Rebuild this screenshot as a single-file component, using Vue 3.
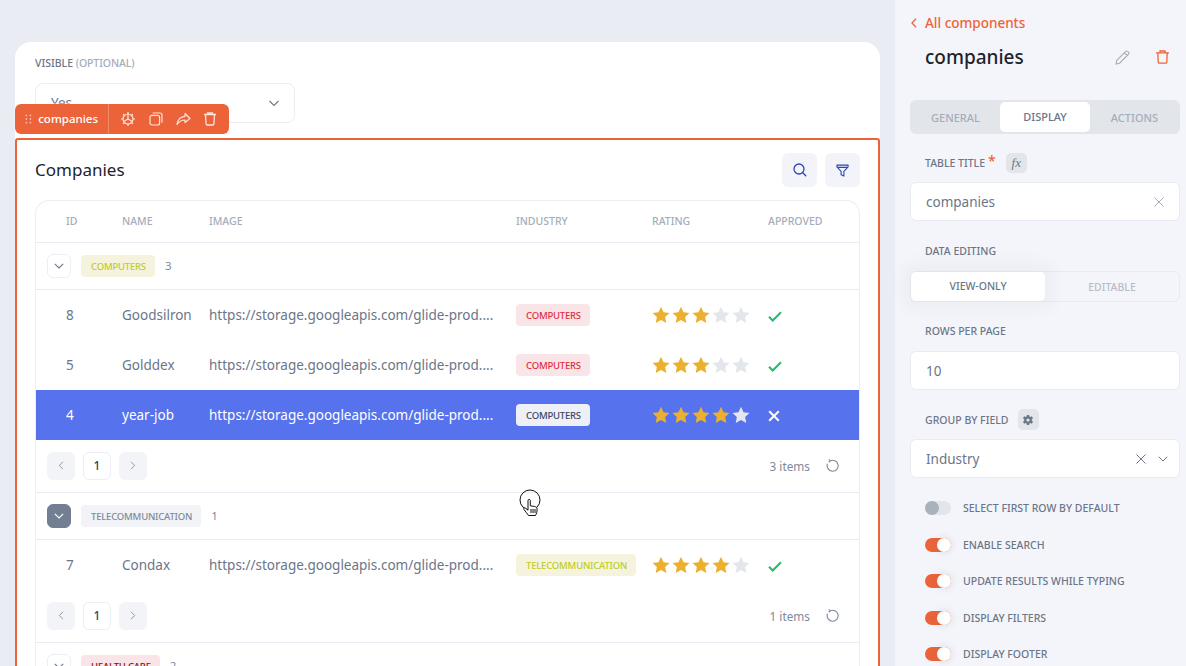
<script setup>
const groups = [
  {
    name: 'COMPUTERS', tone: 'lime', count: 3, footer: '3 items',
    rows: [
      { id: 8, name: 'Goodsilron', tag: 'COMPUTERS', tone: 'red', stars: 3, ok: true },
      { id: 5, name: 'Golddex', tag: 'COMPUTERS', tone: 'red', stars: 3, ok: true },
      { id: 4, name: 'year-job', tag: 'COMPUTERS', tone: 'red', stars: 4, ok: false, active: true }
    ]
  },
  {
    name: 'TELECOMMUNICATION', tone: 'gray', count: 1, footer: '1 items', open: true,
    rows: [{ id: 7, name: 'Condax', tag: 'TELECOMMUNICATION', tone: 'lime', stars: 4, ok: true }]
  }
]
const url = 'https://storage.googleapis.com/glide-prod....'
const toggles = [
  { label: 'SELECT FIRST ROW BY DEFAULT', on: false },
  { label: 'ENABLE SEARCH', on: true },
  { label: 'UPDATE RESULTS WHILE TYPING', on: true },
  { label: 'DISPLAY FILTERS', on: true },
  { label: 'DISPLAY FOOTER', on: true }
]
const starPath = 'M8.5 .6l2.4 5.2 5.6.7-4.100 3.900 1.100 5.600-5-2.800-5 2.800 1.100-5.600L.5 6.500l5.600-.7z'
</script>

<template>
  <div class="page">
    <main class="canvas">
      <section class="card">
        <div class="visible-field">
          <div class="field-label">VISIBLE <span>(OPTIONAL)</span></div>
          <div class="visible-select">
            <span>Yes</span>
            <svg width="12" height="12" viewBox="0 0 12 12" fill="none" stroke="#6b7688" stroke-width="1.100"><path d="M1.500 4l4.500 4.500L10.500 4" /></svg>
          </div>
        </div>

        <div class="toolbar">
          <div class="toolbar-name">
            <svg width="8" height="12" viewBox="0 0 8 12" fill="#f7bda8"><circle cx="1.500" cy="2" r="1" /><circle cx="6" cy="2" r="1" /><circle cx="1.500" cy="6" r="1" /><circle cx="6" cy="6" r="1" /><circle cx="1.500" cy="10" r="1" /><circle cx="6" cy="10" r="1" /></svg>
            <span>companies</span>
          </div>
          <div class="toolbar-icons">
            <svg width="16" height="16" viewBox="0 0 16 16" fill="none" stroke="#fde3d8" stroke-width="1.200"><circle cx="8" cy="8" r="5" /><path d="M8 1v2M8 13v2M1 8h2M13 8h2M3.050 3.050l1.410 1.410M11.540 4.460l1.410-1.410M3.050 12.950l1.410-1.410M11.540 11.540l1.410 1.410M8 8V3M8 8l-4.300 2.500M8 8l4.300 2.500" /></svg>
            <svg width="14" height="14" viewBox="0 0 14 14" fill="none" stroke="#fde3d8" stroke-width="1.200"><rect x="1" y="3.400" width="9.600" height="9.600" rx="2" /><path d="M3.600 1h7.400A2 2 0 0 1 13 3v7.400" /></svg>
            <svg width="15" height="14" viewBox="0 0 15 14" fill="none" stroke="#fde3d8" stroke-width="1.200" stroke-linejoin="round"><path d="M9 1.500L14 6.500 9 10.500V8C5.500 8 3 9.500 1 12.500 1.500 8 4.500 4.800 9 4.300z" /></svg>
            <svg width="12" height="14" viewBox="0 0 12 14" fill="none" stroke="#fde3d8" stroke-width="1.300"><path d="M0 2.500h12M3.500 2.500V1h5v1.500M1.500 2.500l.6 9.300c0 .7.500 1.200 1.200 1.200h5.400c.7 0 1.200-.5 1.200-1.200l.6-9.300" /></svg>
          </div>
        </div>

        <div class="selected-block">
          <div class="table-head">
            <h2>Companies</h2>
            <div class="head-actions">
              <button class="square-btn">
                <svg width="14" height="14" viewBox="0 0 14 14" fill="none" stroke="#2f45b5" stroke-width="1.300"><circle cx="6" cy="6" r="5" /><path d="M9.800 9.800l3.400 3.400" /></svg>
              </button>
              <button class="square-btn">
                <svg width="13" height="13" viewBox="0 0 14 14" fill="none" stroke="#2f45b5" stroke-width="1.200" stroke-linejoin="round"><path d="M1 1.200h12v2L8.500 8v5l-3-1.500V8L1 3.200zM1 3.600h12" /></svg>
              </button>
            </div>
          </div>

          <div class="table">
            <div class="grid-row header-row">
              <div>ID</div><div>NAME</div><div>IMAGE</div><div>INDUSTRY</div><div>RATING</div><div>APPROVED</div>
            </div>

            <template v-for="group in groups" :key="group.name">
              <div class="group-row">
                <button class="collapse" :class="{ open: group.open }">
                  <svg width="10" height="6" viewBox="0 0 10 6" fill="none" stroke="currentColor" stroke-width="1.100"><path d="M.8.800L5 5l4.200-4.200" /></svg>
                </button>
                <span class="tag" :class="group.tone">{{ group.name }}</span>
                <span class="group-count">{{ group.count }}</span>
              </div>

              <div v-for="row in group.rows" :key="row.id" class="grid-row data-row" :class="{ active: row.active }">
                <div>{{ row.id }}</div>
                <div>{{ row.name }}</div>
                <div class="url">{{ url }}</div>
                <div><span class="tag" :class="row.active ? 'light' : row.tone">{{ row.tag }}</span></div>
                <div class="stars">
                  <svg v-for="n in 5" :key="n" width="18" height="18" viewBox="0 0 17 17">
                    <path :d="starPath" :fill="n <= row.stars ? '#ecb02f' : '#e3e7eb'" />
                  </svg>
                </div>
                <div class="approved">
                  <svg v-if="row.ok" width="14" height="11" viewBox="0 0 14 11" fill="none" stroke="#22bd68" stroke-width="2"><path d="M1 5.800l3.700 3.700L13 1.200" /></svg>
                  <svg v-else width="12" height="12" viewBox="0 0 12 12" fill="none" stroke="#fff" stroke-width="2"><path d="M1.200 1.200l9.600 9.600M10.800 1.200l-9.600 9.600" /></svg>
                </div>
              </div>

              <div class="table-footer">
                <div class="pager">
                  <button class="page-btn">
                    <svg width="6" height="9" viewBox="0 0 6 9" fill="none" stroke="#8e99a9"><path d="M5 .8L1.300 4.500 5 8.200" /></svg>
                  </button>
                  <span class="page-current">1</span>
                  <button class="page-btn">
                    <svg width="6" height="9" viewBox="0 0 6 9" fill="none" stroke="#8e99a9"><path d="M1 .8l3.700 3.700L1 8.200" /></svg>
                  </button>
                </div>
                <div class="footer-info">
                  <span>{{ group.footer }}</span>
                  <svg width="13" height="13" viewBox="0 0 13 13" fill="none" stroke="#7f8b9c" stroke-width="1.100"><path d="M4.200 1.800a5.500 5.500 0 1 1-2.700 3M2.800.400l1.500 1.500-1.600 1.300" /></svg>
                </div>
              </div>
            </template>

            <div class="group-row">
              <button class="collapse">
                <svg width="10" height="6" viewBox="0 0 10 6" fill="none" stroke="currentColor" stroke-width="1.100"><path d="M.8.800L5 5l4.200-4.200" /></svg>
              </button>
              <span class="tag maroon">HEALTH CARE</span>
              <span class="group-count">2</span>
            </div>
          </div>
        </div>

        <svg class="cursor" width="22" height="32" viewBox="0 0 22 32" fill="#fff" stroke="#111" stroke-width="1">
          <circle cx="11" cy="11" r="10" fill="none" />
          <path d="M9 11.500c0-1.500 2.300-1.500 2.300 0v5.300l4.200.7c2 .4 2.600 1 2.600 2.500 0 3-.6 4.500-1.600 6.500h-7c-1.300-2-3-3.700-4.500-6-.8-1.300.5-2.200 1.500-1.300l2.500 2z" />
          <path d="M12 20v4M14 20v4M16 20v4" />
        </svg>
      </section>
    </main>

    <aside class="panel">
      <div class="back-link">
        <svg width="6" height="10" viewBox="0 0 6 10" fill="none" stroke="#ee6338" stroke-width="1.300"><path d="M5 .8L1 5l4 4.200" /></svg>
        All components
      </div>
      <div class="panel-title">
        <h1>companies</h1>
        <div class="title-icons">
          <svg width="15" height="15" viewBox="0 0 15 15" fill="none" stroke="#a4adba" stroke-width="1.100"><path d="M1 14l.8-3.600L10.800 1.400a1.300 1.300 0 0 1 1.800 0l1 1a1.300 1.300 0 0 1 0 1.800L4.600 13.200zM9.500 2.800l2.700 2.700" /></svg>
          <svg width="13" height="14" viewBox="0 0 13 14" fill="none" stroke="#ee6338" stroke-width="1.300"><path d="M0 2.800h13M4 2.800V1h5v1.800M1.800 2.800l.4 9.100c0 .7.500 1.200 1.200 1.200h6.200c.7 0 1.200-.5 1.200-1.200l.4-9.100" /></svg>
        </div>
      </div>

      <div class="tabs">
        <span>GENERAL</span>
        <span class="current">DISPLAY</span>
        <span>ACTIONS</span>
      </div>

      <div class="panel-label title-label">
        TABLE TITLE <i class="required">*</i>
        <span class="mini-badge fx">fx</span>
      </div>
      <div class="input">
        <span>companies</span>
        <svg width="10" height="10" viewBox="0 0 10 10" fill="none" stroke="#a4adba"><path d="M.5.500l9 9M9.500.500l-9 9" /></svg>
      </div>

      <div class="panel-label editing-label">DATA EDITING</div>
      <div class="segmented">
        <span class="current">VIEW-ONLY</span>
        <span>EDITABLE</span>
      </div>

      <div class="panel-label rows-label">ROWS PER PAGE</div>
      <div class="input"><span>10</span></div>

      <div class="panel-label group-label">
        GROUP BY FIELD
        <span class="mini-badge">
          <svg width="12" height="12" viewBox="0 0 12 12"><path fill="#6b7688" fill-rule="evenodd" d="M4.900 0h2.200l.3 1.600 1 .5L9.900 1.300l1.100 1.900-1.200 1.100v1.400L11 6.800 9.900 8.700l-1.500-.8-1 .5L7.100 10H4.900l-.3-1.600-1-.5-1.500.8L1 6.800l1.200-1.100V4.300L1 3.200l1.100-1.900 1.500.8 1-.5zM6 3.400a1.600 1.600 0 1 0 0 3.200 1.600 1.600 0 0 0 0-3.200z" transform="translate(0 1)" /></svg>
        </span>
      </div>
      <div class="input">
        <span>Industry</span>
        <div class="input-icons">
          <svg width="10" height="10" viewBox="0 0 10 10" fill="none" stroke="#6b7688"><path d="M.5.500l9 9M9.500.500l-9 9" /></svg>
          <svg width="10" height="6" viewBox="0 0 10 6" fill="none" stroke="#6b7688"><path d="M.8.800L5 5l4.200-4.200" /></svg>
        </div>
      </div>

      <div class="toggles">
        <div v-for="item in toggles" :key="item.label" class="toggle-row">
          <span class="switch" :class="{ on: item.on }"><b></b></span>
          {{ item.label }}
        </div>
      </div>
    </aside>
  </div>
</template>

<style>
html, body {
  margin: 0;
  overflow: hidden;
}
</style>

<style scoped>
.page {
  display: flex;
  width: 1186px;
  height: 666px;
  overflow: hidden;
  font-family: "Noto Sans", "Open Sans", sans-serif;
  background: #e9ecf2;
}

.canvas {
  width: 895px;
  padding: 42px 15px 0;
  box-sizing: border-box;
  flex-shrink: 0;
}

.card {
  position: relative;
  background: #fff;
  border-radius: 16px 16px 0 0;
  padding-top: 14px;
}

.visible-field {
  padding: 0 20px;
  height: 82px;
}

.field-label {
  font-size: 10.500px;
  font-weight: 500;
  line-height: 14px;
  color: #6b7688;
  margin-bottom: 13px;
}

.field-label span {
  color: #a4adba;
  letter-spacing: -.1px;
}

.visible-select {
  width: 260px;
  height: 40px;
  box-sizing: border-box;
  border: 1px solid #ebedf2;
  border-radius: 8px;
  padding: 0 14px 0 15px;
  display: flex;
  align-items: center;
  justify-content: space-between;
  font-size: 13.500px;
  color: #6b7688;
}

.toolbar {
  position: absolute;
  left: 0;
  top: 62px;
  z-index: 2;
  display: flex;
  height: 30px;
  background: #ec6339;
  border-radius: 6px;
  box-shadow: 0 0 0 1px rgba(255, 255, 255, .4);
  color: #fff;
}

.toolbar-name {
  display: flex;
  align-items: center;
  gap: 6px;
  padding: 0 10px;
  width: 73px;
  font-size: 11.500px;
  font-weight: 500;
  border-right: 1px solid #f28a69;
}

.toolbar-name span {
  margin-bottom: 1px;
}

.toolbar-icons {
  display: flex;
  align-items: center;
  gap: 13px;
  padding: 0 13px 0 11px;
}

.selected-block {
  border: 2px solid #ec6339;
  border-bottom: 0;
  border-radius: 3px 3px 0 0;
  padding: 0 18px;
}

.table-head {
  display: flex;
  justify-content: space-between;
  align-items: center;
  height: 60px;
}

.table-head h2 {
  margin: 0 0 2px;
  font-size: 17px;
  font-weight: 400;
  color: #1f232b;
}

.head-actions {
  display: flex;
  gap: 8px;
}

.square-btn {
  width: 35px;
  height: 34px;
  padding: 0;
  border: 0;
  border-radius: 6px;
  background: #f3f4fa;
  display: flex;
  align-items: center;
  justify-content: center;
}

.table {
  border: 1px solid #eceef4;
  border-bottom: 0;
  border-radius: 14px 14px 0 0;
}

.grid-row {
  display: grid;
  grid-template-columns: 86px 87px 307px 136px 116px 1fr;
  align-items: center;
}

.grid-row > div:first-child {
  padding-left: 30px;
}

.header-row {
  height: 39px;
  padding-bottom: 2px;
  border-bottom: 1px solid #e9ebf2;
  font-size: 10.500px;
  font-weight: 500;
  color: #a4adba;
}

.group-row {
  display: flex;
  align-items: center;
  height: 46px;
  padding-left: 11px;
  border-bottom: 1px solid #e9ebf2;
  font-size: 11.500px;
}

.group-row:last-child {
  border-bottom: 0;
}

.collapse {
  width: 24px;
  height: 24px;
  padding: 0;
  border: 1px solid #eceef3;
  border-radius: 6px;
  background: #fff;
  color: #6b7688;
  display: flex;
  align-items: center;
  justify-content: center;
  margin-right: 10px;
}

.collapse.open {
  background: #727f92;
  border-color: #727f92;
  color: #fff;
}

.group-count {
  margin: 0 0 2px 10px;
  color: #7d8a9c;
}

.tag {
  display: inline-flex;
  align-items: center;
  height: 22px;
  padding: 0 9px 0 10px;
  border-radius: 4px;
  font-size: 9.500px;
  font-weight: 500;
  letter-spacing: -.2px;
  white-space: nowrap;
}

.tag.lime {
  background: #f5f3de;
  color: #c0cc28;
}

.tag.red {
  background: #f9e5e7;
  color: #dd2f3f;
}

.tag.gray {
  background: #f1f3f6;
  color: #7d8a9c;
}

.tag.light {
  background: #eef0f8;
  color: #3a4560;
}

.tag.maroon {
  background: #f9e5e7;
  color: #8f0e18;
}

.data-row {
  height: 50px;
  font-size: 13.500px;
  color: #6b7688;
}

.data-row.active {
  background: #5672ec;
  color: #fff;
}

.url {
  white-space: nowrap;
  overflow: hidden;
}

.stars {
  display: flex;
  gap: 2px;
  margin-left: -.5px;
}

.stars svg {
  display: block;
}

.approved {
  display: flex;
  padding-top: 2px;
}

.table-footer {
  display: flex;
  align-items: center;
  justify-content: space-between;
  height: 53px;
  padding: 0 20px 1px 11px;
  box-sizing: border-box;
  border-bottom: 1px solid #e9ebf2;
}

.pager {
  display: flex;
  gap: 8px;
}

.page-btn,
.page-current {
  width: 28px;
  height: 28px;
  box-sizing: border-box;
  border-radius: 6px;
  display: flex;
  align-items: center;
  justify-content: center;
}

.page-btn {
  padding: 0;
  border: 0;
  background: #f3f4f8;
}

.page-current {
  border: 1px solid #eceef3;
  font-size: 12px;
  font-weight: 500;
  color: #3a4452;
}

.footer-info {
  display: flex;
  align-items: center;
  gap: 16px;
  font-size: 11.800px;
  color: #7d8a9c;
}

.cursor {
  position: absolute;
  left: 504px;
  top: 447px;
}

.panel {
  width: 291px;
  box-sizing: border-box;
  padding: 14px 6px 0 15px;
  background: #f4f5fa;
}

.back-link {
  display: flex;
  align-items: center;
  gap: 8px;
  height: 18px;
  font-size: 13.500px;
  font-weight: 500;
  color: #ee6338;
  padding-left: 1px;
}

.panel-title {
  display: flex;
  align-items: center;
  justify-content: space-between;
  height: 30px;
  margin-top: 10px;
  padding: 0 11.500px 0 15px;
}

.panel-title h1 {
  margin: 0;
  font-size: 19px;
  font-weight: 500;
  color: #1f232b;
}

.title-icons {
  display: flex;
  align-items: center;
  gap: 26px;
}

.tabs {
  display: grid;
  grid-template-columns: 89px 90px 1fr;
  align-items: center;
  height: 34px;
  margin-top: 28px;
  padding: 0 1px;
  border-radius: 6px;
  background: #e2e6ea;
  font-size: 11px;
  font-weight: 500;
  color: #a4adba;
  text-align: center;
}

.tabs .current {
  height: 30px;
  line-height: 30px;
  background: #fff;
  border-radius: 5px;
  color: #6b7688;
}

.panel-label {
  display: flex;
  align-items: center;
  gap: 3px;
  font-size: 10.500px;
  font-weight: 500;
  color: #6b7688;
  padding-left: 15px;
}

.title-label {
  height: 20px;
  margin-top: 19px;
  margin-bottom: 9px;
}

.required {
  font-style: normal;
  font-size: 14px;
  line-height: 10px;
  margin: -4px 7px 0 0;
  color: #ee6338;
}

.mini-badge {
  width: 21px;
  height: 21px;
  border-radius: 5px;
  background: #e2e6ea;
  display: flex;
  align-items: center;
  justify-content: center;
}

.mini-badge.fx {
  height: 20px;
  margin-top: -1px;
  font-family: "Liberation Serif", serif;
  font-style: italic;
  font-size: 13px;
  font-weight: 400;
}

.input {
  display: flex;
  align-items: center;
  justify-content: space-between;
  height: 39px;
  box-sizing: border-box;
  border: 1px solid #e9ebf2;
  border-radius: 6px;
  background: #fff;
  padding: 0 15px;
  font-size: 13.500px;
  color: #6b7688;
}

.input-icons {
  display: flex;
  align-items: center;
  gap: 12px;
  margin-right: -4px;
}

.editing-label {
  height: 14px;
  margin-top: 23px;
}

.segmented {
  display: grid;
  grid-template-columns: 134px 1fr;
  align-items: center;
  height: 31px;
  margin-top: 13px;
  border: 1px solid #e9ebf2;
  border-radius: 6px;
  box-sizing: border-box;
  font-size: 10.500px;
  font-weight: 500;
  color: #b6bdc9;
  text-align: center;
}

.segmented .current {
  height: 29px;
  line-height: 29px;
  background: #fff;
  border-radius: 5px;
  color: #6b7688;
  box-shadow: 0 0 16px 8px rgba(120, 125, 140, .06);
}

.rows-label {
  height: 14px;
  margin-top: 22px;
  margin-bottom: 13px;
}

.group-label {
  height: 21px;
  margin-top: 19px;
  margin-bottom: 9px;
  gap: 9px;
}

.toggles {
  display: flex;
  flex-direction: column;
  gap: 22.500px;
  padding: 23px 0 0 15px;
}

.toggle-row {
  display: flex;
  align-items: center;
  gap: 12px;
  height: 14px;
  font-size: 10.500px;
  font-weight: 500;
  color: #6b7688;
  white-space: nowrap;
}

.switch {
  position: relative;
  width: 26px;
  height: 14px;
  border-radius: 7px;
  background: #e2e6ea;
  flex-shrink: 0;
}

.switch b {
  position: absolute;
  left: 0;
  top: 0;
  width: 14px;
  height: 14px;
  border-radius: 50%;
  background: #a9b1bd;
}

.switch.on {
  background: #ec6339;
}

.switch.on b {
  left: 12px;
  background: #fff;
  box-shadow: 0 0 6px 2px rgba(120, 125, 140, .12);
}
</style>
